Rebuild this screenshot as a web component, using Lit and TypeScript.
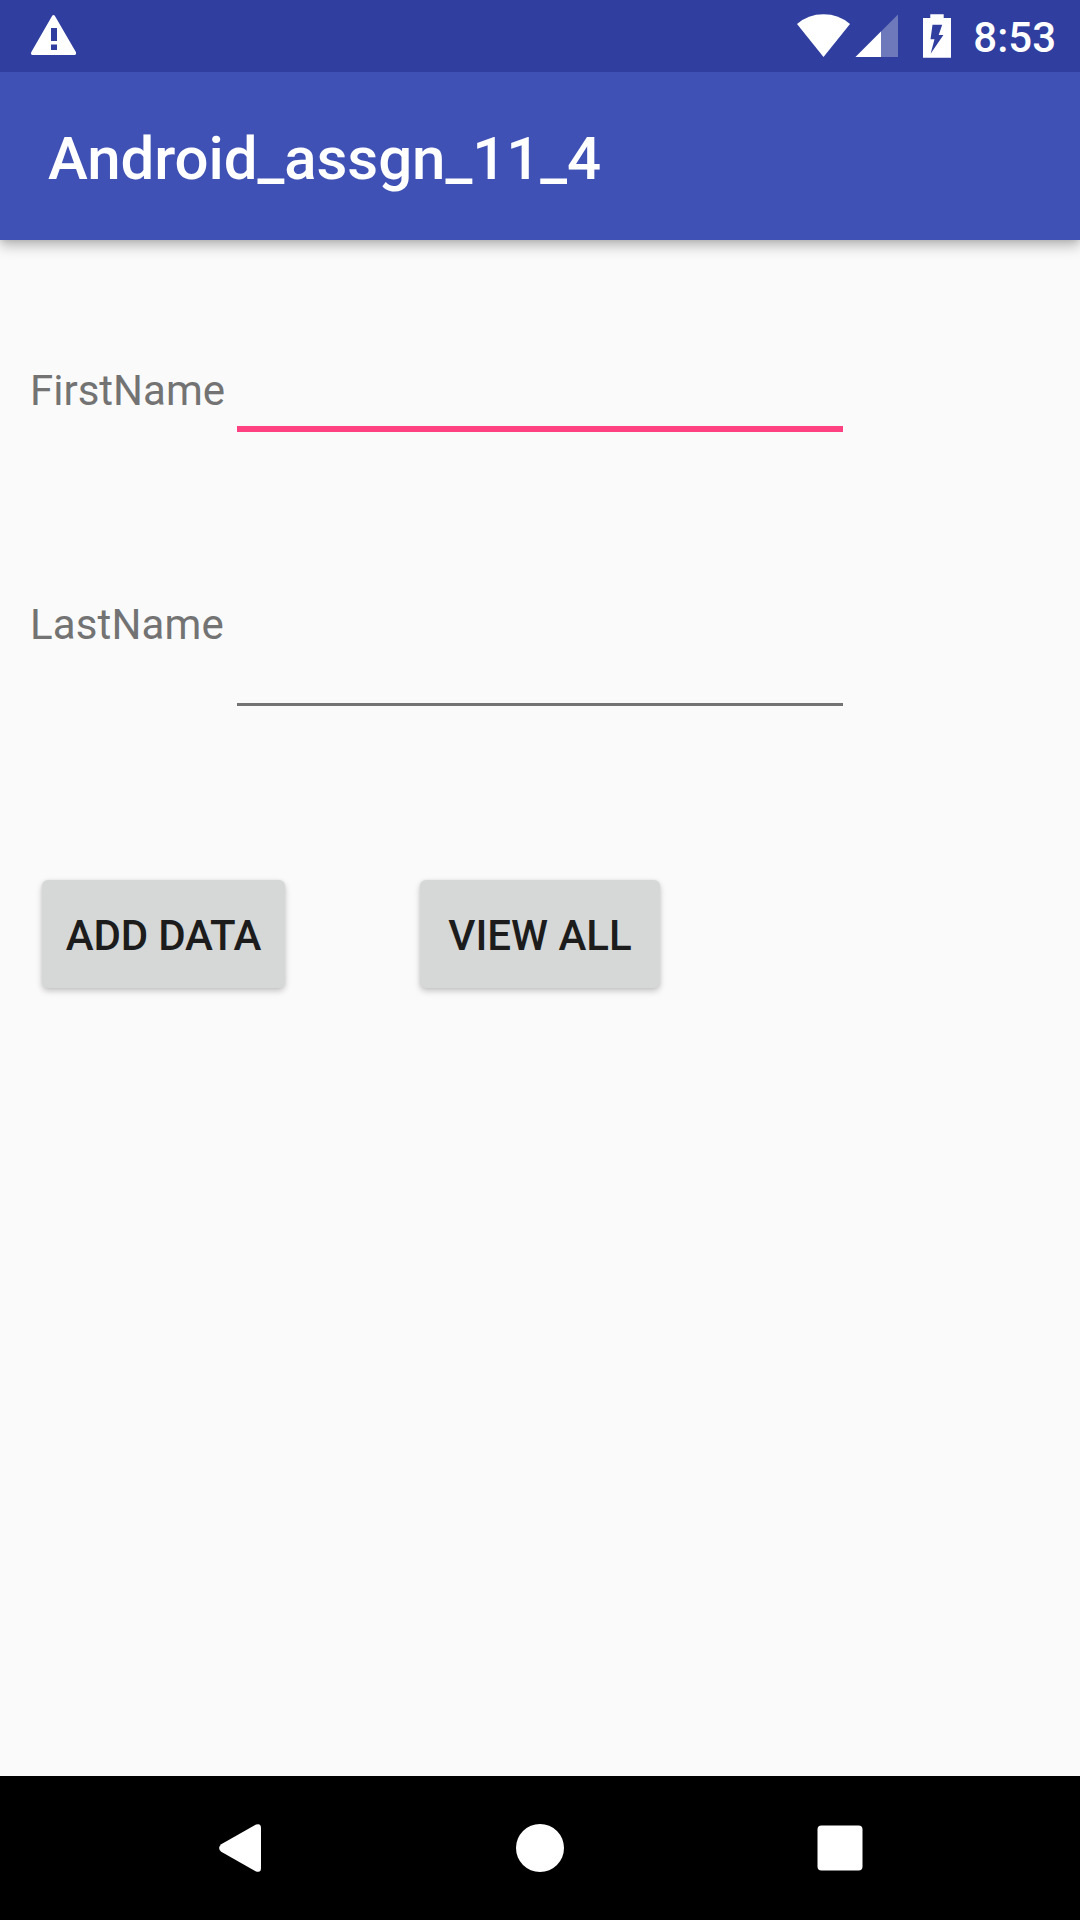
import { LitElement, html, css } from "lit";
import { customElement, property } from "lit/decorators.js";

@customElement("status-bar")
class StatusBar extends LitElement {
  static styles = css`
    :host {
      display: flex;
      align-items: flex-start;
      height: 72px;
      padding: 0 24px 0 30px;
      box-sizing: border-box;
      background: #303f9f;
      color: #fff;
    }
    svg {
      display: block;
      flex: none;
    }
    .status {
      display: flex;
      margin-left: auto;
    }
    .clock {
      margin-left: 19px;
      font-size: 42px;
      line-height: 76px;
      font-weight: 500;
      white-space: nowrap;
    }
  `;

  render() {
    return html`
      <svg width="48" height="72" viewBox="30 0 48 72">
        <path
          fill="#fff"
          fill-rule="evenodd"
          d="M52.2 15.7Q53.5 14.2 54.8 15.7L76 52.3Q76.5 55 74.5 55H32.5Q30.5 55 31.2 52.3ZM51 28V41H57V28ZM51 44.5V50H57V44.5Z"
        />
      </svg>
      <div class="status">
        <svg width="160" height="72" viewBox="794 0 160 72">
          <path fill="#fff" d="M823.5 57L797 24Q808 14.2 823.5 14.2T850 24Z" />
          <path fill="#fff" fill-opacity=".3" d="M898 14.5V57H855.5Z" />
          <path fill="#fff" d="M881 31.5V57H855.5Z" />
          <path
            fill="#fff"
            fill-rule="evenodd"
            d="M930.3 14.2H943.7V18H951V57.7H923V18H930.3ZM932.5 24.7L930.5 39.3H934.5L930.6 53.8L943.4 35H938.7L942.2 24.7Z"
          />
        </svg>
        <span class="clock">8:53</span>
      </div>
    `;
  }
}

@customElement("app-bar")
class AppBar extends LitElement {
  @property() heading = "";

  static styles = css`
    :host {
      display: flex;
      align-items: center;
      height: 168px;
      padding: 5px 48px 0;
      box-sizing: border-box;
      background: #3f51b5;
      color: #fff;
      box-shadow: 0 6px 12px rgba(0, 0, 0, 0.26), 0 0 6px rgba(0, 0, 0, 0.12);
    }
    .title {
      font-size: 60px;
      line-height: 72px;
      font-weight: 500;
      letter-spacing: -0.08px;
      white-space: nowrap;
    }
  `;

  render() {
    return html`<span class="title">${this.heading}</span>`;
  }
}

@customElement("nav-bar")
class NavBar extends LitElement {
  static styles = css`
    :host {
      display: flex;
      justify-content: center;
      align-items: center;
      gap: 204px;
      height: 144px;
      background: #000;
    }
    svg {
      display: block;
      width: 96px;
      height: 96px;
    }
  `;

  render() {
    return html`
      <svg viewBox="192 1800 96 96">
        <path
          fill="#fff"
          d="M221.2 1844.2L256 1824.6Q261 1822.8 261 1828V1868Q261 1873.2 256 1871.4L221.2 1851.8Q217 1848 221.2 1844.2Z"
        />
      </svg>
      <svg viewBox="492 1800 96 96"><circle cx="540" cy="1848" r="24" fill="#fff" /></svg>
      <svg viewBox="792 1800 96 96">
        <rect x="817.5" y="1825.5" width="45" height="45" rx="4" fill="#fff" />
      </svg>
    `;
  }
}

@customElement("app-root")
class AppRoot extends LitElement {
  static styles = css`
    :host {
      display: flex;
      flex-direction: column;
      width: 1080px;
      height: 1920px;
      overflow: hidden;
      background: #fafafa;
      font-family: Roboto, "Liberation Sans", sans-serif;
    }
    status-bar,
    app-bar,
    nav-bar {
      flex: none;
    }
    status-bar {
      z-index: 1;
    }
    .form {
      flex: 1;
      padding: 123px 30px 0;
    }
    .row {
      display: grid;
      grid-template-columns: 207px 606px;
      height: 69px;
    }
    .row.last {
      height: 109px;
      margin-top: 165px;
    }
    .label {
      font-size: 42px;
      line-height: 56px;
      color: #737373;
      white-space: nowrap;
    }
    .last .label {
      letter-spacing: 0.15px;
    }
    .field {
      box-sizing: border-box;
      width: 100%;
      height: 100%;
      padding: 0;
      border: 0;
      border-bottom: 3px solid #737373;
      border-radius: 0;
      outline: none;
      background: transparent;
      font: 54px Roboto, sans-serif;
    }
    .field.active {
      border-bottom: 6px solid #ff4081;
    }
    .actions {
      display: flex;
      gap: 135px;
      margin: 174px 0 0 12px;
    }
    .button {
      width: 243px;
      height: 108px;
      padding: 3px 0 0;
      border: 0;
      border-radius: 6px;
      background: #d6d8d7;
      color: #1c1c1c;
      font: 500 42px/56px Roboto, sans-serif;
      letter-spacing: -0.2px;
      white-space: nowrap;
      box-shadow: 0 3px 6px rgba(0, 0, 0, 0.22), 0 0 3px rgba(0, 0, 0, 0.06);
    }
    .button.view {
      width: 240px;
      letter-spacing: 0;
    }
  `;

  render() {
    return html`
      <status-bar></status-bar>
      <app-bar heading="Android_assgn_11_4"></app-bar>
      <main class="form">
        <div class="row">
          <label class="label" for="first">FirstName</label>
          <input class="field active" id="first" type="text" />
        </div>
        <div class="row last">
          <label class="label" for="last">LastName</label>
          <input class="field" id="last" type="text" />
        </div>
        <div class="actions">
          <button class="button">ADD DATA</button>
          <button class="button view">VIEW ALL</button>
        </div>
      </main>
      <nav-bar></nav-bar>
    `;
  }
}
